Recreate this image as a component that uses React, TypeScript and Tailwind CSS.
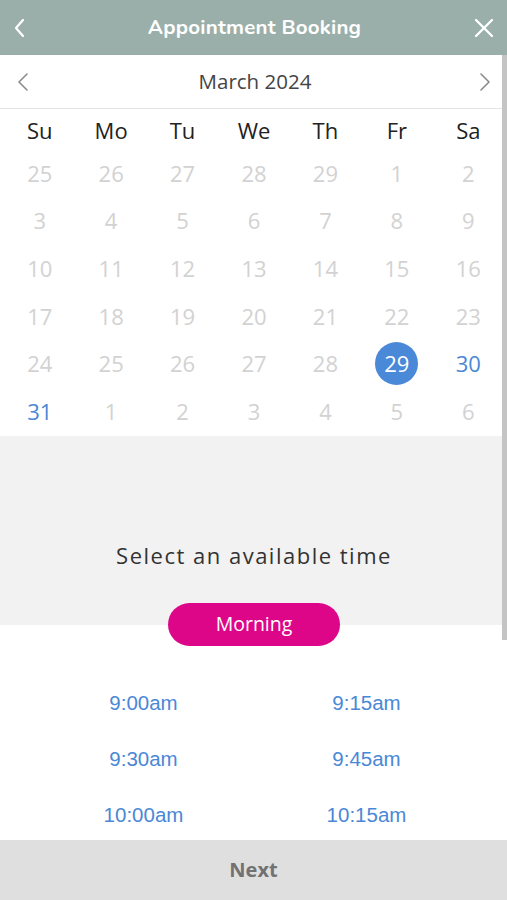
import React from 'react';
import clsx from 'clsx';

const dayNames = ['Su', 'Mo', 'Tu', 'We', 'Th', 'Fr', 'Sa'];

// value, state: 'off' = greyed, 'on' = available, 'sel' = selected
const weeks: [number, 'off' | 'on' | 'sel'][][] = [
  [[25, 'off'], [26, 'off'], [27, 'off'], [28, 'off'], [29, 'off'], [1, 'off'], [2, 'off']],
  [[3, 'off'], [4, 'off'], [5, 'off'], [6, 'off'], [7, 'off'], [8, 'off'], [9, 'off']],
  [[10, 'off'], [11, 'off'], [12, 'off'], [13, 'off'], [14, 'off'], [15, 'off'], [16, 'off']],
  [[17, 'off'], [18, 'off'], [19, 'off'], [20, 'off'], [21, 'off'], [22, 'off'], [23, 'off']],
  [[24, 'off'], [25, 'off'], [26, 'off'], [27, 'off'], [28, 'off'], [29, 'sel'], [30, 'on']],
  [[31, 'on'], [1, 'off'], [2, 'off'], [3, 'off'], [4, 'off'], [5, 'off'], [6, 'off']],
];

const times = ['9:00am', '9:15am', '9:30am', '9:45am', '10:00am', '10:15am'];

const openSans = "font-['Open_Sans','Noto_Sans',sans-serif]";

export default function App() {
  return (
    <div className={clsx('w-[507px] h-[900px] flex flex-col bg-white overflow-hidden', openSans)}>
      {/* Header */}
      <div className="h-[55px] bg-[#9aafaa] flex items-center justify-between px-[13px] shrink-0">
        <svg width="14" height="20" viewBox="0 0 14 20" fill="none" stroke="white" strokeWidth="2.2" strokeLinecap="round" strokeLinejoin="round">
          <path d="M10 2 L3 10 L10 18" />
        </svg>
        <span className="text-white text-[20.5px] font-bold font-['Nunito','Open_Sans',sans-serif] tracking-[0.2px] ml-[8px]">
          Appointment Booking
        </span>
        <svg width="20" height="20" viewBox="0 0 20 20" fill="none" stroke="white" strokeWidth="2.4" strokeLinecap="round">
          <path d="M2 2 L18 18 M18 2 L2 18" />
        </svg>
      </div>

      <div className="flex flex-1 min-h-0">
        {/* Scrollable content */}
        <div className="w-[502px] flex flex-col">
          {/* Month row */}
          <div className="h-[54px] flex items-center justify-between pl-[17px] pr-[11px] border-b border-[#e4e4e4] shrink-0">
            <svg width="12" height="20" viewBox="0 0 12 20" fill="none" stroke="#8a8a8a" strokeWidth="1.6" strokeLinecap="round" strokeLinejoin="round">
              <path d="M10 2 L2 10 L10 18" />
            </svg>
            <span className="text-[20.5px] text-[#444] ml-[2px]">March 2024</span>
            <svg width="12" height="20" viewBox="0 0 12 20" fill="none" stroke="#8a8a8a" strokeWidth="1.6" strokeLinecap="round" strokeLinejoin="round">
              <path d="M2 2 L10 10 L2 18" />
            </svg>
          </div>

          {/* Calendar grid */}
          <div className="ml-[4px] w-[500px] pb-[1px]">
            <div className="grid grid-cols-7 h-[38px] mt-[2px] items-center">
              {dayNames.map((d) => (
                <div key={d} className="text-center text-[22px] text-[#222] leading-none">
                  {d}
                </div>
              ))}
            </div>
            {weeks.map((week, wi) => (
              <div key={wi} className="grid grid-cols-7 h-[47.6px] items-center">
                {week.map(([n, s], di) => (
                  <div key={di} className="flex justify-center">
                    <span
                      className={clsx(
                        'text-[22px] leading-none flex items-center justify-center',
                        s === 'off' && 'text-[#d2d2d2]',
                        s === 'on' && 'text-[#4a88d6]',
                        s === 'sel' && 'w-[43px] h-[43px] rounded-full bg-[#4a88d8] text-white'
                      )}
                    >
                      {n}
                    </span>
                  </div>
                ))}
              </div>
            ))}
          </div>

          {/* Grey band */}
          <div className="h-[189px] bg-[#f2f2f2] flex flex-col items-center pt-[103px] shrink-0">
            <span className="text-[22px] text-[#333] tracking-[1.5px] ml-[6px]">Select an available time</span>
          </div>

          {/* Time slots */}
          <div className="flex-1 flex flex-col">
            <div className="flex justify-center -mt-[22px] pl-[6px]">
              <div className="w-[172px] h-[43px] rounded-full bg-[#dd0689] text-white text-[19.5px] flex items-center justify-center">
                Morning
              </div>
            </div>
            <div className="pl-[32px] w-[478px] grid grid-cols-2 pt-[30px] font-['Liberation_Sans',Arial,sans-serif]">
              {times.map((t) => (
                <div key={t} className="h-[56px] flex items-center justify-center text-[20.5px] text-[#4a88d6]">
                  {t}
                </div>
              ))}
            </div>
          </div>
        </div>

        {/* Scrollbar */}
        <div className="w-[5px] flex flex-col">
          <div className="h-[585px] bg-[#c4c4c4]" />
        </div>
      </div>

      {/* Footer */}
      <div className="h-[60px] bg-[#e0dfe0] flex items-center justify-center shrink-0">
        <span className="text-[20px] font-bold text-[#727272]">Next</span>
      </div>
    </div>
  );
}
